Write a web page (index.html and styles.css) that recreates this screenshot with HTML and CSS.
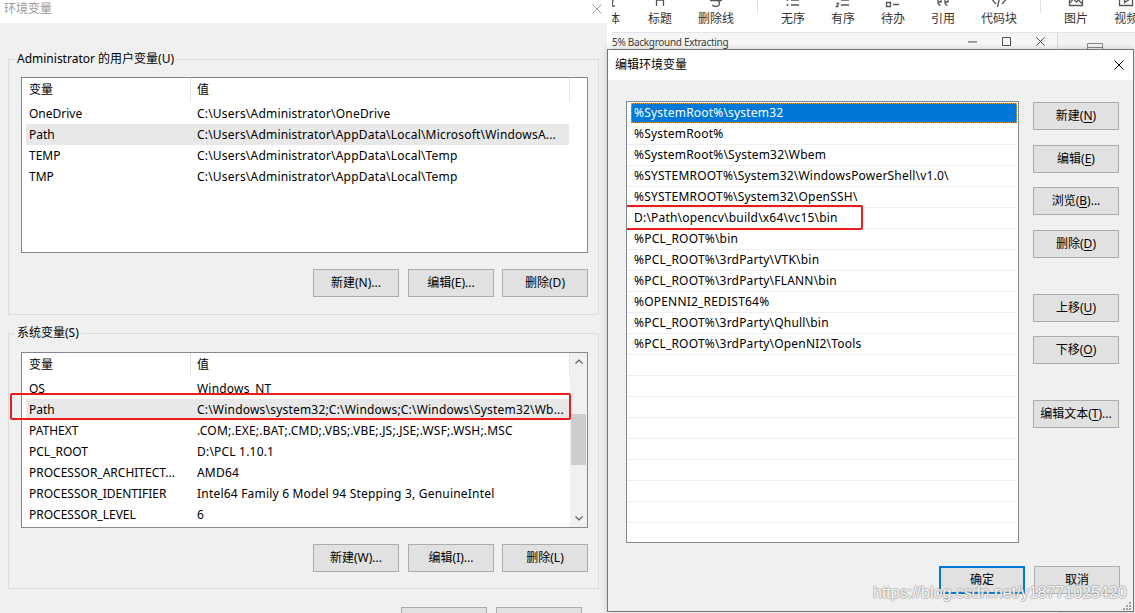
FILE: index.html
```html
<!DOCTYPE html>
<html lang="zh-CN">
<head>
<meta charset="utf-8">
<title>环境变量</title>
<link rel="stylesheet" href="styles.css">
</head>
<body>
<div class="desktop">

  <div class="toolbar">
    <div class="tb-item first"><svg viewBox="0 0 16 16"><path d="M5 2h6M8 2l-2 12M3 14h6"/></svg><span>体</span></div>
    <div class="tb-item"><svg viewBox="0 0 16 16"><path d="M4.5 2v12M11.5 2v12M4.5 8h7"/></svg><span>标题</span></div>
    <div class="tb-item"><svg viewBox="0 0 16 16"><path d="M11.5 3.5C10.5 2.5 9.3 2 8 2 6 2 4.5 3 4.5 4.8S6 7.3 8 7.8s3.5 1.4 3.5 3.3S10 14.5 8 14.5c-1.5 0-2.8-.5-3.8-1.5M2 8.5h12"/></svg><span>删除线</span></div>
    <div class="tb-sep"></div>
    <div class="tb-item"><svg viewBox="0 0 16 16"><path d="M6 3h8M6 8h8M6 13h8"/><circle cx="2.5" cy="3" r="1"/><circle cx="2.5" cy="8" r="1"/><circle cx="2.5" cy="13" r="1"/></svg><span>无序</span></div>
    <div class="tb-item"><svg viewBox="0 0 16 16"><path d="M6 3h8M6 8h8M6 13h8M2.5 1.5v3M1.5 11.5h2l-2 3h2"/></svg><span>有序</span></div>
    <div class="tb-item"><svg viewBox="0 0 16 16"><path d="M1.5 1.5h4v4h-4zM1.5 10.5h4v4h-4zM8 3.5h6M8 12.5h6"/></svg><span>待办</span></div>
    <div class="tb-item"><svg viewBox="0 0 16 16"><path d="M3 6h3v4H3zM3 10c0 2 1 3 2.5 3.5M10 6h3v4h-3zM10 10c0 2 1 3 2.5 3.5"/></svg><span>引用</span></div>
    <div class="tb-item"><svg viewBox="0 0 16 16"><path d="M5 4L1.5 8 5 12M11 4l3.5 4-3.5 4M9.5 2l-3 13"/></svg><span>代码块</span></div>
    <div class="tb-sep"></div>
    <div class="tb-item"><svg viewBox="0 0 16 16"><path d="M1.5 2.5h13v11h-13zM1.5 11l4-4 3 3 2-2 4 4"/></svg><span>图片</span></div>
    <div class="tb-item"><svg viewBox="0 0 16 16"><path d="M1.5 2.5h13v11h-13zM6.5 5.5v5l4-2.5z"/></svg><span>视频</span></div>
  </div>

  <div class="bgbar">
    <span class="bg-title">5% Background Extracting</span>
    <span class="bg-ctl"><svg viewBox="0 0 10 10"><path d="M0 5.5h10"/></svg></span>
    <span class="bg-ctl"><svg viewBox="0 0 10 10"><path d="M.5 .5h9v9h-9z"/></svg></span>
    <span class="bg-ctl"><svg viewBox="0 0 10 10"><path d="M.5 .5l9 9M9.5 .5l-9 9"/></svg></span>
  </div>

  <div class="sidepanel">
    <svg class="side-icon" viewBox="0 0 16 16"><path d="M.5 .5h15v15H.5zM.5 4.5h15"/></svg>
  </div>

  <!-- 环境变量 window -->
  <div class="env">
    <div class="titlebar">
      <span class="title inactive">环境变量</span>
      <svg class="close" viewBox="0 0 10 10"><path d="M.5 .5l9 9M9.5 .5l-9 9"/></svg>
    </div>
    <div class="env-body">
      <fieldset class="group">
        <legend>Administrator 的用户变量(U)</legend>
        <div class="lv">
          <div class="lv-main">
            <div class="lv-head"><div class="hd c1">变量</div><div class="hd c2">值</div></div>
            <div class="lv-row"><span class="n">OneDrive</span><span class="v">C:\Users\Administrator\OneDrive</span></div>
            <div class="lv-row sel"><span class="n">Path</span><span class="v">C:\Users\Administrator\AppData\Local\Microsoft\WindowsA...</span></div>
            <div class="lv-row"><span class="n">TEMP</span><span class="v">C:\Users\Administrator\AppData\Local\Temp</span></div>
            <div class="lv-row"><span class="n">TMP</span><span class="v">C:\Users\Administrator\AppData\Local\Temp</span></div>
          </div>
          <div class="lv-side"></div>
        </div>
        <div class="btn-row">
          <button class="btn">新建(N)...</button>
          <button class="btn">编辑(E)...</button>
          <button class="btn">删除(D)</button>
        </div>
      </fieldset>

      <fieldset class="group group2">
        <legend>系统变量(S)</legend>
        <div class="lv">
          <div class="lv-main">
            <div class="lv-head"><div class="hd c1">变量</div><div class="hd c2">值</div></div>
            <div class="lv-row"><span class="n">OS</span><span class="v">Windows_NT</span></div>
            <div class="lv-row sel"><span class="n">Path</span><span class="v">C:\Windows\system32;C:\Windows;C:\Windows\System32\Wb...</span><span class="mark mark-path"></span></div>
            <div class="lv-row"><span class="n">PATHEXT</span><span class="v">.COM;.EXE;.BAT;.CMD;.VBS;.VBE;.JS;.JSE;.WSF;.WSH;.MSC</span></div>
            <div class="lv-row"><span class="n">PCL_ROOT</span><span class="v">D:\PCL 1.10.1</span></div>
            <div class="lv-row"><span class="n">PROCESSOR_ARCHITECT...</span><span class="v">AMD64</span></div>
            <div class="lv-row"><span class="n">PROCESSOR_IDENTIFIER</span><span class="v">Intel64 Family 6 Model 94 Stepping 3, GenuineIntel</span></div>
            <div class="lv-row"><span class="n">PROCESSOR_LEVEL</span><span class="v">6</span></div>
          </div>
          <div class="lv-side sb">
            <div class="sb-btn"><svg viewBox="0 0 8 5"><path d="M.5 4.5L4 1l3.5 3.5"/></svg></div>
            <div class="sb-track"><div class="sb-thumb"></div></div>
            <div class="sb-btn"><svg viewBox="0 0 8 5"><path d="M.5 .5L4 4 7.5 .5"/></svg></div>
          </div>
        </div>
        <div class="btn-row">
          <button class="btn">新建(W)...</button>
          <button class="btn">编辑(I)...</button>
          <button class="btn">删除(L)</button>
        </div>
      </fieldset>

      <div class="env-footer">
        <button class="btn" aria-label="确定"></button>
        <button class="btn" aria-label="取消"></button>
      </div>
    </div>
  </div>

  <!-- 编辑环境变量 dialog -->
  <div class="edit">
    <div class="titlebar edit-title">
      <span class="title">编辑环境变量</span>
      <svg class="close" viewBox="0 0 10 10"><path d="M.5 .5l9 9M9.5 .5l-9 9"/></svg>
    </div>
    <div class="edit-body">
      <div class="edit-main">
        <div class="plist">
          <div class="prow"><div class="cell sel">%SystemRoot%\system32</div></div>
          <div class="prow"><div class="cell">%SystemRoot%</div></div>
          <div class="prow"><div class="cell">%SystemRoot%\System32\Wbem</div></div>
          <div class="prow"><div class="cell">%SYSTEMROOT%\System32\WindowsPowerShell\v1.0\</div></div>
          <div class="prow"><div class="cell">%SYSTEMROOT%\System32\OpenSSH\</div></div>
          <div class="prow"><div class="cell">D:\Path\opencv\build\x64\vc15\bin</div><span class="mark mark-cv"></span></div>
          <div class="prow"><div class="cell">%PCL_ROOT%\bin</div></div>
          <div class="prow"><div class="cell">%PCL_ROOT%\3rdParty\VTK\bin</div></div>
          <div class="prow"><div class="cell">%PCL_ROOT%\3rdParty\FLANN\bin</div></div>
          <div class="prow"><div class="cell">%OPENNI2_REDIST64%</div></div>
          <div class="prow"><div class="cell">%PCL_ROOT%\3rdParty\Qhull\bin</div></div>
          <div class="prow"><div class="cell">%PCL_ROOT%\3rdParty\OpenNI2\Tools</div></div>
          <div class="prow"><div class="cell"></div></div>
          <div class="prow"><div class="cell"></div></div>
          <div class="prow"><div class="cell"></div></div>
          <div class="prow"><div class="cell"></div></div>
          <div class="prow"><div class="cell"></div></div>
          <div class="prow"><div class="cell"></div></div>
          <div class="prow"><div class="cell"></div></div>
          <div class="prow"><div class="cell"></div></div>
        </div>
        <div class="side-btns">
          <button class="btn">新建(<u>N</u>)</button>
          <button class="btn">编辑(<u>E</u>)</button>
          <button class="btn">浏览(<u>B</u>)...</button>
          <button class="btn">删除(<u>D</u>)</button>
          <button class="btn gap-lg">上移(<u>U</u>)</button>
          <button class="btn">下移(<u>O</u>)</button>
          <button class="btn gap-lg">编辑文本(<u>T</u>)...</button>
        </div>
      </div>
      <div class="edit-footer">
        <button class="btn default">确定</button>
        <button class="btn">取消</button>
      </div>
    </div>
    <svg class="grip" viewBox="0 0 8 8"><rect x="6" y="0" width="2" height="2"/><rect x="3" y="3" width="2" height="2"/><rect x="6" y="3" width="2" height="2"/><rect x="0" y="6" width="2" height="2"/><rect x="3" y="6" width="2" height="2"/><rect x="6" y="6" width="2" height="2"/></svg>
  </div>

  <div class="watermark">https://blog.csdn.net/y18771025420</div>
</div>
</body>
</html>
```

FILE: styles.css
```css
* { box-sizing: border-box; }
html, body { margin: 0; padding: 0; }
body {
  width: 1135px;
  height: 613px;
  overflow: hidden;
  font-family: "Noto Sans", "Noto Sans CJK SC", sans-serif;
  font-size: 12px;
  color: #000;
}
.desktop {
  position: relative;
  width: 1135px;
  height: 613px;
  overflow: hidden;
  background: #ffffff;
}

/* background editor toolbar */
.toolbar {
  position: absolute;
  left: 612px;
  top: 0;
  width: 523px;
  height: 33px;
  background: #fff;
  border-bottom: 1px solid #e3e3e3;
  display: flex;
  overflow: hidden;
}
.tb-item {
  flex: none;
  display: flex;
  flex-direction: column;
  align-items: center;
  padding: 0 13px;
}
.tb-item.first { margin-left: -19px; }
.tb-item svg {
  flex: none;
  width: 16px;
  height: 16px;
  margin-top: -8px;
  fill: none;
  stroke: #555;
  stroke-width: 1.3;
}
.tb-item svg circle { fill: #555; stroke: none; }
.tb-item span {
  margin-top: 3px;
  line-height: 16px;
  font-size: 12px;
  color: #333;
  white-space: nowrap;
}
.tb-sep {
  flex: none;
  width: 21px;
  display: flex;
  justify-content: center;
}
.tb-sep::before {
  content: "";
  width: 1px;
  height: 13px;
  background: #dedede;
}

/* background window title bar */
.bgbar {
  position: absolute;
  left: 612px;
  top: 33px;
  width: 446px;
  height: 17px;
  background: #f6f6f6;
  border-right: 1px solid #d6d6d6;
  display: flex;
  align-items: center;
}
.bg-title {
  flex: 1;
  font-size: 10px;
  letter-spacing: -0.3px;
  line-height: 16px;
  color: #3a3a3a;
  white-space: nowrap;
}
.bg-ctl {
  flex: none;
  width: 34px;
  display: flex;
  justify-content: center;
  align-items: center;
}
.bg-ctl svg {
  width: 9px;
  height: 9px;
  fill: none;
  stroke: #333;
  stroke-width: 1;
}
.sidepanel {
  position: absolute;
  left: 1058px;
  top: 33px;
  width: 77px;
  height: 580px;
  background: #f3f3f3;
  padding: 10px 0 0 29px;
}
.side-icon {
  display: block;
  width: 16px;
  height: 16px;
  fill: none;
  stroke: #888;
  stroke-width: 1;
}

/* windows */
.titlebar {
  display: flex;
  align-items: center;
  justify-content: space-between;
  background: #fff;
}
.title { font-size: 12px; line-height: 16px; white-space: nowrap; }
.title.inactive { color: #9a9a9a; }
.close {
  width: 10px;
  height: 10px;
  fill: none;
  stroke: #000;
  stroke-width: 1;
}

.env {
  position: absolute;
  left: 0;
  top: 0;
  width: 607px;
  height: 613px;
  background: #f0f0f0;
  z-index: 2;
}
.env .titlebar {
  height: 23px;
  padding: 0 5px 5px 4px;
}
.env .close { stroke: #999; }
.env-body {
  padding: 28px 8px 0 8px;
}
.group {
  margin: 0;
  width: 591px;
  padding: 10px 10px 17px 12px;
  border: 1px solid #dcdcdc;
  min-width: 0;
}
.group legend {
  padding: 0 2px;
  margin-left: -6px;
  line-height: 16px;
  font-size: 12px;
  white-space: nowrap;
}
.group2 {
  margin-top: 10px;
  padding-top: 11px;
  padding-bottom: 16px;
}
.lv {
  width: 567px;
  height: 176px;
  border: 1px solid #828790;
  background: #fff;
  display: flex;
}
.lv-main {
  width: 548px;
  flex: none;
}
.lv-side {
  width: 17px;
  flex: none;
}
.lv-head {
  height: 25px;
  display: flex;
}
.hd {
  height: 24px;
  line-height: 24px;
  border-right: 1px solid #e5e5e5;
  white-space: nowrap;
}
.hd.c1 { width: 169px; padding-left: 7px; }
.hd.c2 { flex: 1; padding-left: 6px; }
.lv-row {
  position: relative;
  display: flex;
  height: 21px;
  line-height: 21px;
  margin-left: 4px;
  width: 543px;
  padding-left: 3px;
  white-space: nowrap;
  letter-spacing: 0.2px;
}
.lv-row.sel { background: #e8e8e8; }
.lv-row .n { width: 168px; flex: none; overflow: hidden; letter-spacing: 0; }
.lv-row .v { flex: 1; overflow: hidden; }

.sb {
  display: flex;
  flex-direction: column;
  background: #f0f0f0;
}
.sb-btn {
  height: 17px;
  flex: none;
  display: flex;
  align-items: center;
  justify-content: center;
}
.sb-btn svg {
  width: 8px;
  height: 5px;
  fill: none;
  stroke: #606060;
  stroke-width: 1.2;
}
.sb-track { flex: 1; padding: 44px 1px 0 1px; }
.sb-thumb { height: 51px; background: #cdcdcd; }

.mark {
  position: absolute;
  border: 2px solid #ec1c1c;
  border-radius: 2px;
  pointer-events: none;
}
.mark-path {
  left: -16px;
  top: -6px;
  width: 561px;
  height: 27px;
}

.btn {
  width: 86px;
  height: 28px;
  background: #e1e1e1;
  border: 1px solid #adadad;
  font-family: inherit;
  font-size: 12px;
  color: #000;
  padding: 0;
  margin: 0;
  line-height: 16px;
  white-space: nowrap;
}
.btn u { text-underline-offset: 2px; }
.btn-row {
  margin-top: 16px;
  display: flex;
  justify-content: flex-end;
  gap: 9px;
}
.btn-row .btn:last-child { margin-left: -1px; }
.env-footer {
  margin-top: 18px;
  display: flex;
  justify-content: flex-end;
  gap: 9px;
  padding-right: 17px;
}

/* edit dialog */
.edit {
  position: absolute;
  left: 607px;
  top: 49px;
  width: 527px;
  height: 563px;
  border: 1px solid #767676;
  background: #f0f0f0;
  z-index: 3;
  box-shadow: 0 0 6px rgba(0, 0, 0, 0.18);
}
.edit .titlebar {
  height: 30px;
  padding: 0 9px 0 7px;
}
.edit-body {
  padding: 21px 13px 0 18px;
}
.edit-main {
  display: flex;
  gap: 14px;
}
.plist {
  width: 393px;
  height: 442px;
  flex: none;
  border: 1px solid #828790;
  background: #fff;
  padding-top: 1px;
  overflow: hidden;
}
.prow {
  position: relative;
  height: 21px;
  border-bottom: 1px solid #efefef;
  margin-right: 1px;
}
.cell {
  margin-left: 4px;
  height: 20px;
  line-height: 20px;
  padding-left: 3px;
  white-space: nowrap;
  letter-spacing: 0.2px;
}
.cell.sel {
  background: #0078d7;
  color: #fff;
  outline: 1px dotted #e6a046;
  outline-offset: -1px;
}
.mark-cv {
  left: -5px;
  top: -3px;
  width: 241px;
  height: 25px;
}
.side-btns {
  width: 86px;
  flex: none;
  display: flex;
  flex-direction: column;
  padding-top: 1px;
  gap: 15px;
}
.side-btns .btn:nth-child(3) { margin-top: -1px; }
.side-btns .btn.gap-lg { margin-top: 21px; }
.side-btns .btn:nth-child(6) { margin-top: -1px; }
.edit-footer {
  margin-top: 23px;
  display: flex;
  justify-content: flex-end;
  gap: 9px;
}
.btn.default {
  border: 2px solid #0078d7;
}
.grip {
  position: absolute;
  right: 2px;
  bottom: 1px;
  width: 8px;
  height: 8px;
  fill: #a0a0a0;
}

.watermark {
  position: absolute;
  left: 873px;
  top: 584px;
  z-index: 5;
  font-family: "Liberation Sans", Arial, sans-serif;
  font-size: 16px;
  line-height: 18px;
  color: rgba(255, 255, 255, 0.92);
  text-shadow: 1px 0 0 rgba(150,150,150,.55), -1px 0 0 rgba(150,150,150,.55), 0 1px 0 rgba(150,150,150,.55), 0 -1px 0 rgba(150,150,150,.55);
  white-space: nowrap;
  pointer-events: none;
}
```
